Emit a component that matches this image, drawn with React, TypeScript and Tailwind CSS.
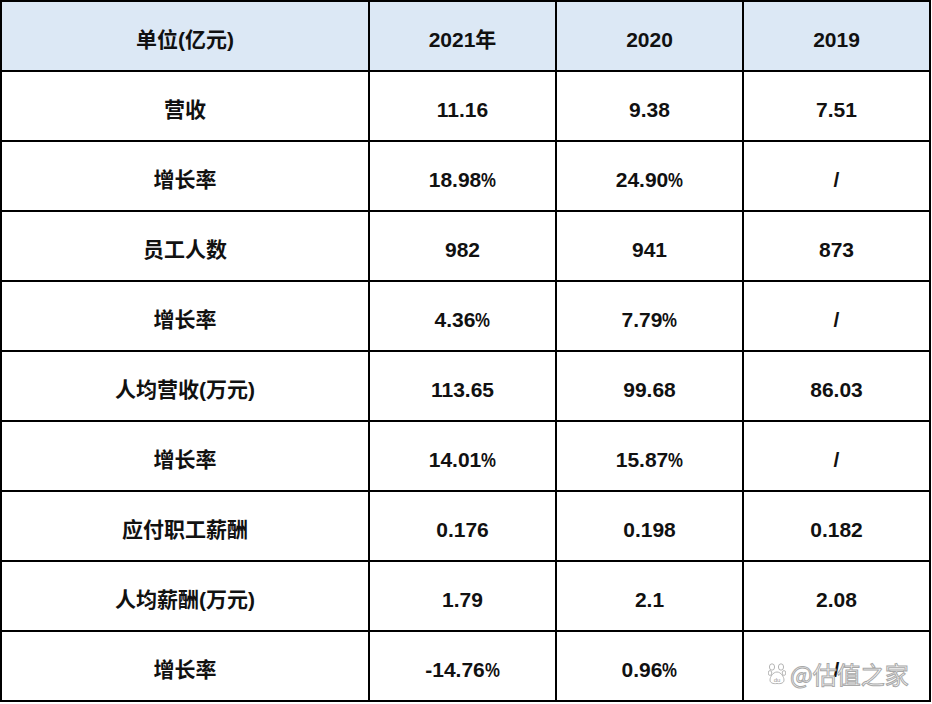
const header = ["单位(亿元)", "2021年", "2020", "2019"];

const rows: string[][] = [
  ["营收", "11.16", "9.38", "7.51"],
  ["增长率", "18.98%", "24.90%", "/"],
  ["员工人数", "982", "941", "873"],
  ["增长率", "4.36%", "7.79%", "/"],
  ["人均营收(万元)", "113.65", "99.68", "86.03"],
  ["增长率", "14.01%", "15.87%", "/"],
  ["应付职工薪酬", "0.176", "0.198", "0.182"],
  ["人均薪酬(万元)", "1.79", "2.1", "2.08"],
  ["增长率", "-14.76%", "0.96%", "/"],
];

function CellText({ text }: { text: string }) {
  // the percent sign in the source is narrower than Arial's
  if (text.endsWith("%")) {
    return (
      <span>
        {text.slice(0, -1)}
        <span className="inline-block w-[15px] scale-x-[0.8] origin-left">%</span>
      </span>
    );
  }
  return <span>{text}</span>;
}

function Paw() {
  return (
    <svg width="18" height="22" viewBox="0 0 18 22" className="mr-[4px]">
      <g fill="white" stroke="#b5b5b5" strokeWidth="1">
        <ellipse cx="4" cy="4" rx="2.6" ry="3.2" />
        <ellipse cx="13" cy="4" rx="2.6" ry="3.2" />
        <ellipse cx="2" cy="10" rx="1.8" ry="2.4" />
        <ellipse cx="16" cy="10" rx="1.8" ry="2.4" />
        <path d="M9 9 C5 9 2 14 2 17 C2 20 5 21 9 20.5 C13 21 16 20 16 17 C16 14 13 9 9 9 Z" />
      </g>
      <text x="9" y="19" textAnchor="middle" fontSize="6" fill="#999" fontFamily="Liberation Sans, sans-serif">du</text>
    </svg>
  );
}

export default function App() {
  return (
    <div className="w-[932px] h-[704px] bg-white font-['Liberation_Sans','Noto_Sans_CJK_SC',sans-serif] text-[21px] font-bold text-[#111]">
      <div className="relative w-[931px]">
        <div className="grid grid-cols-[366px_185px_185px_185px] gap-[2px] p-[2px] bg-black">
          {header.map((h, i) => (
            <div key={i} className="h-[68px] bg-[#dce8f5] flex items-center justify-center pt-[7px]">
              {h}
            </div>
          ))}
          {rows.map((r, ri) =>
            r.map((c, ci) => (
              <div key={`${ri}-${ci}`} className="h-[68px] bg-white flex items-center justify-center pt-[7px]">
                <CellText text={c} />
              </div>
            ))
          )}
        </div>
        <div className="absolute left-[768px] top-[656px] flex items-center text-[24px] font-normal text-white [-webkit-text-stroke:1px_#a8a8a8] font-['Noto_Sans_CJK_SC',sans-serif]">
          <Paw />
          <span>@估值之家</span>
        </div>
      </div>
    </div>
  );
}
